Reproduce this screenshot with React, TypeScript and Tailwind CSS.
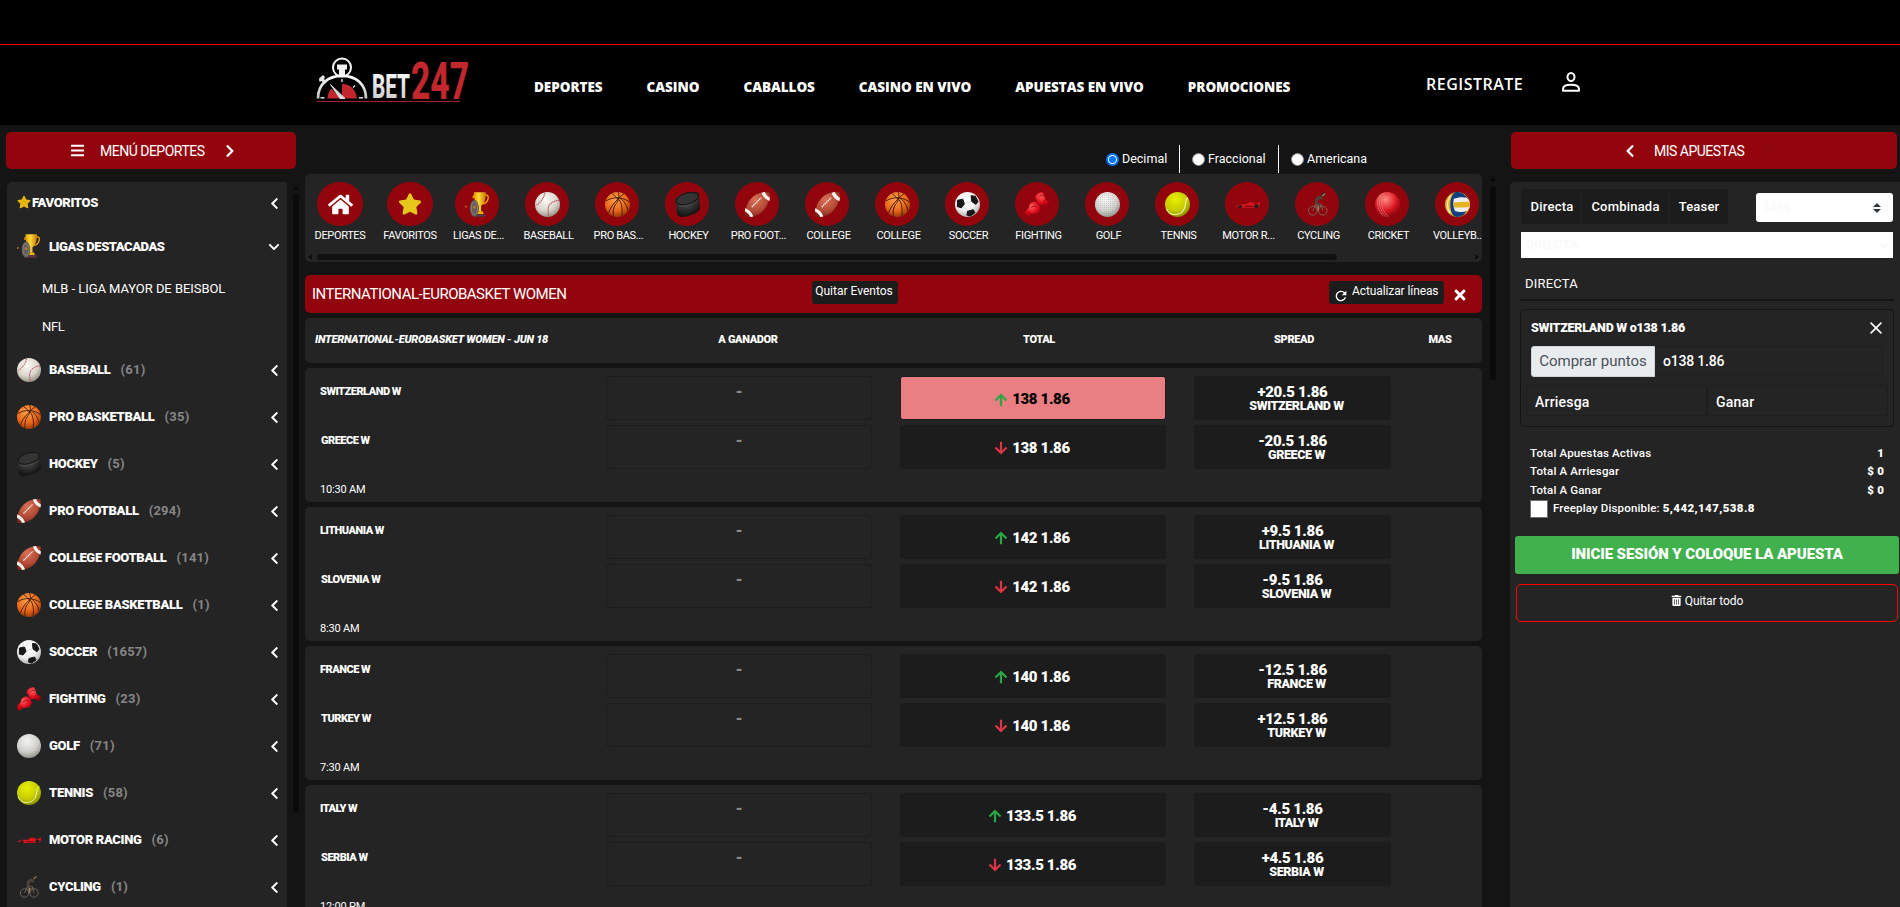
import React from "react";
import { FaHome, FaStar, FaBars, FaChevronRight, FaChevronLeft, FaChevronDown, FaTimes, FaTrashAlt } from "react-icons/fa";
import { MdRefresh } from "react-icons/md";

type IconName =
  | "trophy" | "baseball" | "basketball" | "hockey" | "football" | "soccer" | "fighting"
  | "golf" | "tennis" | "motor" | "cycling" | "cricket" | "volleyball";

function Defs() {
  const balls: [string, string, string, string][] = [
    ["gBase", "#fbfaf5", "#d9d5cb", "#8b867b"],
    ["gBask", "#ffa24a", "#e8661a", "#8f3306"],
    ["gFoot", "#d9725a", "#b44a35", "#6f2418"],
    ["gSocc", "#ffffff", "#eeeeee", "#a5a5a5"],
    ["gGolf", "#ffffff", "#d6d5d0", "#8a8a84"],
    ["gTenn", "#eaf000", "#c6cc00", "#7f8600"],
    ["gCric", "#ff8a80", "#d81420", "#7d0410"],
    ["gGlov", "#ff5a5a", "#e00b1c", "#90000c"],
    ["gPuck", "#5a5a5a", "#2b2b2b", "#0c0c0c"],
  ];
  return (
    <svg width="0" height="0" className="absolute">
      <defs>
        {balls.map(([id, a, b, c]) => (
          <radialGradient key={id} id={id} cx="0.42" cy="0.3" r="0.75">
            <stop offset="0" stopColor={a} />
            <stop offset="0.6" stopColor={b} />
            <stop offset="1" stopColor={c} />
          </radialGradient>
        ))}
        <linearGradient id="gGold" x1="0" x2="1">
          <stop offset="0" stopColor="#e79a00" />
          <stop offset="0.4" stopColor="#ffdc3a" />
          <stop offset="1" stopColor="#c97a00" />
        </linearGradient>
        <linearGradient id="gSilver" x1="0" x2="0" y1="0" y2="1">
          <stop offset="0" stopColor="#ffffff" />
          <stop offset="1" stopColor="#c4c4c4" />
        </linearGradient>
        <pattern id="dimples" width="2" height="2" patternUnits="userSpaceOnUse">
          <circle cx="1" cy="1" r="0.5" fill="#9a9a95" opacity="0.6" />
        </pattern>
      </defs>
    </svg>
  );
}

function Sport({ name, className }: { name: IconName; className: string }) {
  const glyph: Record<IconName, React.ReactNode> = {
    trophy: (
      <>
        <path d="M18.5 3.5c2 -1.2 4.3 -.4 3.8 2.3c-.5 3 -2.6 5 -5 5.6M10 3c-1.500 0-2.500 1-2 3" fill="none" stroke="#eda900" strokeWidth="1.300" />
        <path d="M8.500.3h11.500c0 6-1 11-4.500 13v5.500h-2.500v-5.500C9.800 11.500 8.500 7 8.500.3z" fill="url(#gGold)" />
        <path d="M11.500 18.500h5.500l.8 2.500h-7z" fill="#f0b000" />
        <path d="M9.500 21h10v2.700h-10z" fill="#5a3448" />
        <ellipse cx="9" cy="15.700" rx="4.300" ry="8" fill="#625d5c" />
        <ellipse cx="9" cy="15.500" rx="3" ry="6" fill="none" stroke="#94897b" strokeWidth=".8" />
        <circle cx="9" cy="14.500" r="1.500" fill="#b47d35" />
        <circle cx=".9" cy="14" r=".9" fill="#c07f10" />
      </>
    ),
    baseball: (
      <>
        <circle cx="12" cy="12" r="12" fill="url(#gBase)" />
        <path d="M9.500 .8C8.500 6 5 10.500.6 13M23.300 8c-6 .2-10.200 3.500-10.600 8c-.2 3 .2 5 .8 7.500" fill="none" stroke="#b8485a" strokeWidth="1" strokeDasharray="1.300 .6" />
      </>
    ),
    basketball: (
      <>
        <circle cx="12" cy="12" r="12" fill="url(#gBask)" />
        <path d="M1 8.500C8 4 17 5 23.500 9.500M3.500 20C6 12 13 6 18 1.800M12.500 0C14 4 14 7 10 12c-2 3-2.500 7-2 11.500M13.500 7.500c3 4 3.500 10 2.500 15.500M14.500 6c3 2 6.500 6 7.500 12M6.500 1.500C9 3 11 5 13 8" fill="none" stroke="#3d1a08" strokeWidth=".9" />
      </>
    ),
    hockey: (
      <>
        <path d="M.3 8C1 3 14 .1 20 .1c2.200 0 3 1 3 3L24 15.500c0 4-11 8.500-18 8.400c-2.500-.1-4-1.500-4.300-4z" fill="url(#gPuck)" />
        <ellipse cx="11.700" cy="6.300" rx="11" ry="5.200" transform="rotate(-16 11.700 6.300)" fill="#343434" stroke="#161616" />
        <path d="M3 13.500c5 1.500 14-1.500 19-5" stroke="#555" strokeWidth=".6" fill="none" />
      </>
    ),
    football: (
      <>
        <path d="M.3 23.700C-.8 14 5 4 13.500 1.300C17 .1 21 .1 23.700.4C24.600 8 20 18 12.500 21.800C9 23.700 4 24.300.3 23.700z" fill="url(#gFoot)" />
        <path d="M16 .6c.8 3.800 4 7 7.600 8l.3-3.200c-2.200-1-4.200-3-4.800-5.300zM.1 15.500c3.500 1 6.800 4 7.900 8l-3 .5c-.8-2.200-2.600-4.200-5-5.200z" fill="#f6f2ee" />
        <path d="M6.500 14.500L15.500 5.500" stroke="#fff" strokeWidth="1.100" strokeDasharray="1.500 .5" />
      </>
    ),
    soccer: (
      <>
        <circle cx="12" cy="12" r="12" fill="url(#gSocc)" />
        <path d="M2.500 8L7.500 7L9 11.500L6 15L2.300 14zM15.500 3.500L19.500 4l2.500 5l-2 2.800l-4-2.800zM12 18.500l5.500-1.500l1.500 3l-4.500 3l-3-1z" fill="#171717" stroke="#171717" strokeLinejoin="round" />
        <path d="M9 11l7-2M13 18l-5-3.500M18.500 17l2-5M7.500 7l4-4.500" stroke="#cfcfcf" strokeWidth=".6" />
      </>
    ),
    fighting: (
      <>
        <path d="M9.500 5C10 2 14 -.3 17 .2l1.500 3.300L20 8l4 1.500l-1 4.300l-2.500-.5l-3.500-1.800c-2.500 1.500-5-.5-5.500-3z" fill="url(#gGlov)" />
        <path d="M4 14.500C3.500 11.500 7 9 10.500 9.500L14 12.500c1.500 3.500 0 6.500-2.500 8l-5.500.5L2.500 23.800L0 22.500l.3-3.500z" fill="url(#gGlov)" />
        <path d="M6 15c2-2 4-2 5.500-.5M14 4.500c1.500-1.500 3-1.500 4-.5M3 19l3 2.500M19.500 7.500L17.500 10" stroke="#8d0210" strokeWidth=".8" fill="none" />
      </>
    ),
    golf: (
      <>
        <circle cx="12" cy="12" r="12" fill="url(#gGolf)" />
        <circle cx="12" cy="12" r="11.500" fill="url(#dimples)" />
      </>
    ),
    tennis: (
      <>
        <circle cx="12" cy="12" r="12" fill="url(#gTenn)" />
        <path d="M22 5.500c-3 2-1.500 6-3.500 10.500c-1.800 4-6 6-10.500 5.500C5 21 2.500 18.500 1.300 16" fill="none" stroke="#f2f5b0" strokeWidth="1" />
      </>
    ),
    motor: (
      <>
        <path d="M0 13.500l5-1.700h6l3-2.300l4 .5l1 1.500l5-2v2.500l-1.500 3h-17L3 14.200z" fill="#d8141f" />
        <circle cx="5" cy="14" r="1.800" fill="#2b1c1c" />
        <circle cx="20.500" cy="13.700" r="2.200" fill="#2b1c1c" />
        <path d="M9 13.800h8" stroke="#7a0b12" />
      </>
    ),
    cycling: (
      <>
        <g fill="none" stroke="#73695f" strokeWidth=".9">
          <circle cx="7.500" cy="18" r="4.200" />
          <circle cx="17" cy="18" r="4.200" />
          <path d="M7.500 18l3-6.500l5 .3l1.500 6M12 18l-1.500-6.500M12 18l4-6" />
        </g>
        <path d="M10 6.500c1-2 3-3 5-3l2.500 3.500l-1 1l-2-1.500L12 9l2 3.500v5l-1.300.2l-.5-4L9.500 10z" fill="#4c4238" />
        <circle cx="17.500" cy="2.500" r="2" fill="#332a24" />
        <path d="M16.500 4l3-2.500M12.500 13l.3 4.500" stroke="#c49a62" strokeWidth="1" />
      </>
    ),
    cricket: (
      <>
        <circle cx="12" cy="12" r="12" fill="url(#gCric)" />
        <path d="M7 1.200C2.500 7 3.500 17 10.500 23.800M9 .5C4.500 7 5.500 17 13 23.900M5 2.500C.8 8 1.800 17 8 23.300" fill="none" stroke="#e88a8a" strokeWidth=".8" strokeDasharray="1.200 .5" />
      </>
    ),
    volleyball: (
      <>
        <circle cx="12" cy="12" r="12" fill="#e6b422" />
        <path d="M9.500 .3C4 4 3.500 19 9 23.600c2 .5 4 .5 6 0C20 21 21 18 20.500 16L22.500 7C20 3 17 1 14 .2c-1.500-.3-3-.2-4.500.1z" fill="#123f80" />
        <path d="M8.500 6.500c3.500-1.500 8-2 12.500-1c2 2 3 4.500 3 7.500c-.5 2-1.500 4-3 5.200c-4 1.500-8 1-11.500 0c-1.500-4-2-7.500-1-11.700z" fill="#eeeeee" />
        <path d="M8 10c5-.7 10-.8 15.700-.7c.4 1.800.3 3.700 0 5c-5.500.7-10.500.8-15.200.4z" fill="#e6b422" />
        <path d="M5.500 3.500C1.500 8 1.500 16 5 20.500" stroke="#efefef" fill="none" />
      </>
    ),
  };
  return (
    <svg viewBox="0 0 24 24" className={className}>
      {glyph[name]}
    </svg>
  );
}

function Logo() {
  return (
    <svg width="154" height="48" viewBox="0 0 154 48">
      <circle cx="26" cy="10.500" r="9" fill="none" stroke="#f5f5f5" strokeWidth="2" />
      <path d="M21 7.500h10v5h-2v7h-6v-7h-2z" fill="#f3f3f3" />
      <path d="M2 41.500C2 27 12 18.800 26 18.800S50 27 50 41.500" fill="none" stroke="url(#gSilver)" strokeWidth="2.800" />
      <path d="M3 21.500l4-3.500l2 2l-1 2l3 3l-2.500 2l-3-3l-2 1z" fill="#e2e2e2" />
      <path d="M26 41.500V27c8.500 0 14.500 6 14.800 14.500zM11.500 41.500c0-4 1.500-7.500 4-10l9 10z" fill="#c1272d" />
      <path d="M14.500 27.500L29 41.500h-5z" fill="#dcdcdc" stroke="#dcdcdc" />
      <path d="M26 22v3M39 28.500l-2 2M4.500 40.800h4M43 40.800h4" stroke="#ddd" strokeWidth="1.400" />
      <text x="56" y="41" fontFamily="Roboto" fontWeight="800" fontSize="33" textLength="38" lengthAdjust="spacingAndGlyphs" fill="url(#gSilver)">BET</text>
      <text x="95" y="41.500" fontFamily="Roboto" fontWeight="800" fontSize="51" textLength="58" lengthAdjust="spacingAndGlyphs" fill="#c1272d">247</text>
      <path d="M1 44.500h143" stroke="#a81f28" strokeWidth="1.200" />
    </svg>
  );
}

const NAV = ["DEPORTES", "CASINO", "CABALLOS", "CASINO EN VIVO", "APUESTAS EN VIVO", "PROMOCIONES"];

function Header() {
  return (
    <header className="h-[125px] bg-black">
      <div className="h-[45px] border-b border-[#ff0000]" />
      <div className="flex h-20 items-start">
        <div className="ml-[316px] mt-3 w-[218px]">
          <Logo />
        </div>
        <nav className="mt-8 flex h-5 gap-11 font-['Open_Sans'] text-[13.500px] leading-5 font-extrabold text-white">
          {NAV.map((n) => (
            <a key={n} className="whitespace-nowrap tracking-[-0.04px]">{n}</a>
          ))}
        </nav>
        <div className="mt-[27px] ml-auto flex w-[474px] font-['Open_Sans'] text-[16px] leading-6 font-semibold text-white">
          <a className="w-[136px] tracking-[0.5px]">REGISTRATE</a>
          <svg width="18" height="20" viewBox="0 0 18 20" fill="none" stroke="#fff" strokeWidth="2">
            <ellipse cx="9" cy="5" rx="3.500" ry="4" />
            <path d="M1 18.800v-1.600c0-2.700 3.200-4.400 8-4.400s8 1.700 8 4.400v1.600z" strokeLinejoin="round" />
          </svg>
        </div>
      </div>
    </header>
  );
}

const SPORTS: [IconName, string, number][] = [
  ["baseball", "BASEBALL", 61],
  ["basketball", "PRO BASKETBALL", 35],
  ["hockey", "HOCKEY", 5],
  ["football", "PRO FOOTBALL", 294],
  ["football", "COLLEGE FOOTBALL", 141],
  ["basketball", "COLLEGE BASKETBALL", 1],
  ["soccer", "SOCCER", 1657],
  ["fighting", "FIGHTING", 23],
  ["golf", "GOLF", 71],
  ["tennis", "TENNIS", 58],
  ["motor", "MOTOR RACING", 6],
  ["cycling", "CYCLING", 1],
];

function Sidebar() {
  return (
    <aside className="w-[299px] shrink-0 pl-1.5 pt-[7px]">
      <button className="flex h-[37px] w-[290px] items-center rounded-[5px] bg-[#92050d] pl-[64px] text-white">
        <FaBars className="size-[15px]" />
        <span className="mt-0.5 ml-[15px] w-[108px] text-left text-[14px] tracking-[-0.5px] whitespace-nowrap">MENÚ DEPORTES</span>
        <FaChevronRight className="ml-[15px] size-[14px]" />
      </button>
      <div className="mt-[13px] flex pl-px">
        <div className="h-[725px] w-[281px] overflow-hidden rounded-tl-[5px] bg-[#242424] pr-1.5 pl-2.5 text-[13px] font-black text-white">
          <div className="flex h-10 items-center">
            <FaStar className="-mt-px size-[14px] text-[#e6b50e]" />
            <span className="mt-px ml-px tracking-[-0.35px]">FAVORITOS</span>
            <FaChevronLeft className="mt-0.5 ml-auto size-[13px]" />
          </div>
          <div className="flex h-12 items-center">
            <Sport name="trophy" className="size-6" />
            <span className="mt-px ml-2 tracking-[-0.45px]">LIGAS DESTACADAS</span>
            <FaChevronDown className="mt-0.5 mr-px ml-auto size-[12px]" />
          </div>
          <div className="flex h-[38px] items-center pl-[25px] text-[13px] font-normal tracking-[-0.05px]">MLB - LIGA MAYOR DE BEISBOL</div>
          <div className="flex h-[38px] items-center pl-[25px] text-[13px] font-normal tracking-[-0.3px]">NFL</div>
          {SPORTS.map(([icon, name, count]) => (
            <div key={name} className="flex h-[47px] items-center">
              <Sport name={icon} className="size-6" />
              <span className="ml-2 tracking-[-0.3px]">{name}</span>
              <span className="ml-2.5 font-bold tracking-[0.2px] text-[#868686]">({count})</span>
              <FaChevronLeft className="mt-0.5 ml-auto size-[13px]" />
            </div>
          ))}
        </div>
        <div className="ml-1.5 w-1.5">
          <div className="mt-[4px] h-0 w-0 border-x-[3px] border-b-4 border-x-transparent border-b-[#060606]" />
          <div className="mt-[4px] h-[619px] rounded-[3px] bg-[#0a0a0a]" />
        </div>
      </div>
    </aside>
  );
}

const STRIP: [IconName, string][] = [
  ["trophy", "LIGAS DE..."],
  ["baseball", "BASEBALL"],
  ["basketball", "PRO BAS..."],
  ["hockey", "HOCKEY"],
  ["football", "PRO FOOT..."],
  ["football", "COLLEGE"],
  ["basketball", "COLLEGE"],
  ["soccer", "SOCCER"],
  ["fighting", "FIGHTING"],
  ["golf", "GOLF"],
  ["tennis", "TENNIS"],
  ["motor", "MOTOR R..."],
  ["cycling", "CYCLING"],
  ["cricket", "CRICKET"],
  ["volleyball", "VOLLEYB..."],
];

function SportStrip() {
  return (
    <div className="mt-px h-[88px] overflow-hidden rounded-[5px] bg-[#242424] text-[11px] leading-5 tracking-[-0.35px] text-white">
      <div className="flex h-20 pt-2 pl-2.5 whitespace-nowrap">
        <div className="flex w-[50px] shrink-0 flex-col items-center">
          <div className="flex h-11 w-[46px] items-center justify-center rounded-full bg-[#92050d]"><FaHome className="size-[25px]" /></div>
          <span>DEPORTES</span>
        </div>
        <div className="mr-[18px] ml-5 flex w-[50px] shrink-0 flex-col items-center">
          <div className="flex h-11 w-[46px] items-center justify-center rounded-full bg-[#92050d]"><FaStar className="size-6 text-[#e6c619]" /></div>
          <span>FAVORITOS</span>
        </div>
        <div className="flex gap-5">
          {STRIP.map(([icon, label], i) => (
            <div key={i} className="flex w-[50px] shrink-0 flex-col items-center">
              <div className="mr-[2px] flex size-11 items-center justify-center rounded-full bg-[#92050d]"><Sport name={icon} className="size-[25px]" /></div>
              <span className="pl-px">{label}</span>
            </div>
          ))}
        </div>
      </div>
      <div className="flex h-1.5 items-center pl-[3px]">
        <div className="h-0 w-0 border-y-[3px] border-r-4 border-y-transparent border-r-[#0e0e0e]" />
        <div className="ml-[5px] h-1.5 w-[1020px] rounded-[3px] bg-[#111111]" />
        <div className="mr-[3px] ml-auto h-0 w-0 border-y-[3px] border-l-4 border-y-transparent border-l-[#0e0e0e]" />
      </div>
    </div>
  );
}

function OddsRadio({ label, checked = false }: { label: string; checked?: boolean }) {
  return (
    <label className="flex items-center gap-[3px]">
      <span className={checked ? "flex size-[13px] items-center justify-center rounded-full border-2 border-[#0075ff] bg-white" : "size-[13px] rounded-full border border-[#8a8a8a] bg-white"}>
        {checked && <span className="size-[7px] rounded-full bg-[#0075ff]" />}
      </span>
      <span>{label}</span>
    </label>
  );
}

function Arrow({ up }: { up: boolean }) {
  return (
    <svg width="14" height="14" viewBox="0 0 14 14" fill="none" strokeWidth="2.200" className={up ? "mr-1 stroke-[#28a745]" : "mr-1 rotate-180 stroke-[#dc3545]"}>
      <path d="M7 13.200V2.500M1.500 7.500L7 2l5.500 5.500" />
    </svg>
  );
}

const GAMES: { teams: [string, string]; total: string; spreads: [string, string]; time: string; picked?: boolean }[] = [
  { teams: ["SWITZERLAND W", "GREECE W"], total: "138 1.86", spreads: ["+20.5 1.86", "-20.5 1.86"], time: "10:30 AM", picked: true },
  { teams: ["LITHUANIA W", "SLOVENIA W"], total: "142 1.86", spreads: ["+9.5 1.86", "-9.5 1.86"], time: "8:30 AM" },
  { teams: ["FRANCE W", "TURKEY W"], total: "140 1.86", spreads: ["-12.5 1.86", "+12.5 1.86"], time: "7:30 AM" },
  { teams: ["ITALY W", "SERBIA W"], total: "133.5 1.86", spreads: ["-4.5 1.86", "+4.5 1.86"], time: "12:00 PM" },
];

function Game({ game }: { game: (typeof GAMES)[number] }) {
  return (
    <div className="mt-[5px] h-[134px] rounded-[5px] bg-[#242424] pt-2 pl-[15px] text-white">
      {game.teams.map((team, i) => {
        const picked = game.picked && i === 0;
        return (
          <div key={team} className="mb-[5px] flex h-11 font-black">
            <div className={i ? "w-[286px] pt-2 pl-px text-[11px] leading-4 tracking-[-0.5px]" : "w-[286px] pt-2 text-[11px] leading-4 tracking-[-0.5px]"}>{team}</div>
            <div className="flex w-[266px] justify-center rounded-[3px] border border-[#1d1d1d] pt-[5px] text-[16px] leading-5 text-[#8a8a8a]">-</div>
            <div className={picked
              ? "ml-7 flex w-[266px] items-center justify-center rounded-[3px] border border-[#1c1c1c] bg-[#e97f82] pt-[3px] pr-0.5 text-[15px] text-black"
              : "ml-7 flex w-[266px] items-center justify-center rounded-[3px] bg-[#1c1c1c] pt-[2px] pr-0.5 text-[15px]"}>
              <Arrow up={i === 0} />
              <span className="tracking-[-0.35px]">{game.total}</span>
            </div>
            <div className="ml-7 flex w-[197px] flex-col items-center rounded-[3px] bg-[#1c1c1c] pt-2">
              <span className="text-[15px] leading-4 tracking-[-0.3px]">{game.spreads[i]}</span>
              <span className="ml-2 text-[12.5px] leading-3 tracking-[-0.35px]">{team}</span>
            </div>
          </div>
        );
      })}
      <div className="pt-2 text-[11px] leading-4 tracking-[-0.2px]">{game.time}</div>
    </div>
  );
}

function Main() {
  return (
    <main className="ml-1.5 w-[1177px] shrink-0">
      <div className="flex h-12 items-start pl-[801px] text-[12.5px] text-white">
        <div className="mt-5 flex h-7 w-[74px] items-center border-r border-white"><OddsRadio label="Decimal" checked /></div>
        <div className="mt-5 flex h-7 w-[99px] items-center border-r border-white pl-3"><OddsRadio label="Fraccional" /></div>
        <div className="mt-5 flex h-7 items-center pl-3"><OddsRadio label="Americana" /></div>
      </div>
      <SportStrip />
      <div className="mt-[13px] flex h-[38px] items-center rounded-[5px] bg-[#92050d] pl-[7px] text-white">
        <div className="w-[500px] text-[15px] tracking-[-0.5px]">INTERNATIONAL-EUROBASKET WOMEN</div>
        <div className="-mt-[3px] h-[23px] w-[86px] rounded-[3px] bg-[#1c1c1c] pr-0.5 text-center text-[12px] leading-5">Quitar Eventos</div>
        <div className="-mt-[3px] ml-[431px] flex h-[23px] w-[115px] rounded-[3px] bg-[#1c1c1c] pl-1 text-[12px] leading-5">
          <MdRefresh className="mt-[7px] size-4" />
          <span className="ml-[3px] tracking-[-0.1px]">Actualizar líneas</span>
        </div>
        <FaTimes className="mt-px ml-[8px] size-4" />
      </div>
      <div className="mt-[5px] flex h-[45px] rounded-[5px] bg-[#242424] pt-3.5 pl-2.5 text-[11px] leading-4 font-black tracking-[-0.35px] text-white">
        <div className="w-[353px] tracking-[-0.25px] italic">INTERNATIONAL-EUROBASKET WOMEN - JUN 18</div>
        <div className="w-[160px] text-center">A GANADOR</div>
        <div className="ml-[131px] w-[160px] text-center">TOTAL</div>
        <div className="ml-[95px] w-[160px] text-center">SPREAD</div>
        <div className="ml-[26px] w-20 text-center">MAS</div>
      </div>
      {GAMES.map((g) => <Game key={g.time} game={g} />)}
    </main>
  );
}

function TotalLine({ label, value }: { label: string; value: string }) {
  return (
    <div className="flex h-[18.5px] items-center justify-between">
      <span>{label}</span>
      <b className="font-black">{value}</b>
    </div>
  );
}

function BetSlip() {
  return (
    <aside className="ml-3.5 w-[390px] shrink-0 pt-[7px] text-white">
      <div className="ml-px flex h-[37px] w-[386px] items-center rounded-[5px] bg-[#92050d] pl-[112px]">
        <FaChevronLeft className="size-[14px]" />
        <span className="mt-0.5 ml-[17px] w-[109px] text-[14px] tracking-[-0.5px]">MIS APUESTAS</span>
        <span className="text-[13px] font-bold text-[#870810]">1</span>
      </div>
      <div className="mt-[13px] h-[725px] rounded-tl-[5px] bg-[#242424] pt-[7px] pl-[5px]">
        <div className="ml-1.5 flex h-[35px]">
          <div className="flex w-[207px] rounded-[3px] bg-[#1c1c1c] text-center text-[13px] leading-9 font-medium">
            <span className="w-[61px] border-r border-[#242424] pl-0.5 tracking-[0.2px]">Directa</span>
            <span className="w-[88px] border-r border-[#242424] tracking-[0.2px]">Combinada</span>
            <span className="flex-1 tracking-[0.2px]">Teaser</span>
          </div>
          <div className="mt-1 ml-7 flex h-[29px] w-[137px] items-center justify-between rounded-[3px] bg-white pr-3 pl-2 text-[14px] font-medium text-[#fafafa]">
            <span>Mas</span>
            <svg width="8" height="10" viewBox="0 0 8 10" fill="#343a40"><path d="M0 4L4 0l4 4zM0 6l4 4l4-4z" /></svg>
          </div>
        </div>
        <div className="mt-2 ml-1.5 flex h-[26px] w-[372px] items-center justify-between bg-white pr-1 pl-[5px] text-[13px] font-bold text-[#fafafa]">
          <span>DIRECTA</span>
          <FaChevronDown className="size-[9px] text-[#f4f4f4]" />
        </div>
        <div className="ml-[5px] h-[43px] w-[374px] border-b-2 border-[#141414] pt-[17px] pl-[5px] text-[13px] leading-[18px] tracking-[0.2px]">DIRECTA</div>
        <div className="mt-2 ml-[5px] h-[118px] w-[374px] rounded-[4px] border border-[#141414] pt-2.5 pl-[5px]">
          <div className="flex h-[17px] w-[356px] items-center justify-between pl-[5px] text-[12.5px] font-black tracking-[-0.25px]">
            <span>SWITZERLAND W o138 1.86</span>
            <svg width="12" height="12" viewBox="0 0 12 12" stroke="#fff" strokeWidth="1.600" className="-mt-0.5"><path d="M.6.6L11.400 11.400M11.400.6L.6 11.400" /></svg>
          </div>
          <div className="mt-[9px] ml-[5px] flex">
            <div className="flex h-[31px] w-[124px] items-center justify-center rounded-l-[3px] border border-[#ced4da] bg-[#e9ecef] text-[15px] text-[#495057]">Comprar puntos</div>
            <div className="flex h-[29px] w-[228px] items-center rounded-r-[3px] border border-l-0 border-[#1e1e1e] pt-px pl-2 text-[14px] font-medium tracking-[-0.2px]">o138 1.86</div>
          </div>
          <div className="mt-2 flex text-[14px] font-medium">
            <div className="flex h-[31px] w-[181px] items-center rounded-[3px] border border-[#1e1e1e] pt-[3px] pl-2 tracking-[0.2px]">Arriesga</div>
            <div className="flex h-[31px] w-[181px] items-center rounded-[3px] border border-[#1e1e1e] pt-[3px] pl-2 tracking-[0.2px]">Ganar</div>
          </div>
        </div>
        <div className="mt-[17px] w-[369px] pl-[15px] text-[11.500px] font-medium tracking-[0.15px]">
          <TotalLine label="Total Apuestas Activas" value="1" />
          <TotalLine label="Total A Arriesgar" value="$ 0" />
          <TotalLine label="Total A Ganar" value="$ 0" />
          <div className="flex h-[18px]">
            <span className="size-[18px] border border-[#6d6d6d] bg-white" />
            <span className="ml-[5px] leading-4">Freeplay Disponible: <b className="font-black tracking-[0.4px]">5,442,147,538.8</b></span>
          </div>
        </div>
        <button className="mt-[18px] flex h-[38px] w-[384px] items-center justify-center rounded-[3px] bg-[#41b14d] text-[15px] font-black tracking-[-0.1px]">
          <span>INICIE SESIÓN Y COLOQUE LA APUESTA</span>
        </button>
        <button className="mt-2.5 ml-px flex h-[38px] w-[382px] items-center justify-center gap-[3px] rounded-[5px] border border-[#ff0000] pb-1 text-[12px] tracking-[-0.1px]">
          <FaTrashAlt className="size-[11px]" />
          Quitar todo
        </button>
      </div>
    </aside>
  );
}

export default function App() {
  return (
    <div className="h-[907px] w-[1900px] overflow-hidden bg-[#141414] font-['Roboto',sans-serif]">
      <Defs />
      <Header />
      <div className="flex">
        <Sidebar />
        <Main />
        <div className="mt-[52px] ml-2 w-1.5 shrink-0">
          <div className="h-0 w-0 border-x-[3px] border-b-4 border-x-transparent border-b-[#060606]" />
          <div className="mt-[5px] h-[194px] rounded-[3px] bg-[#0a0a0a]" />
        </div>
        <BetSlip />
      </div>
    </div>
  );
}
